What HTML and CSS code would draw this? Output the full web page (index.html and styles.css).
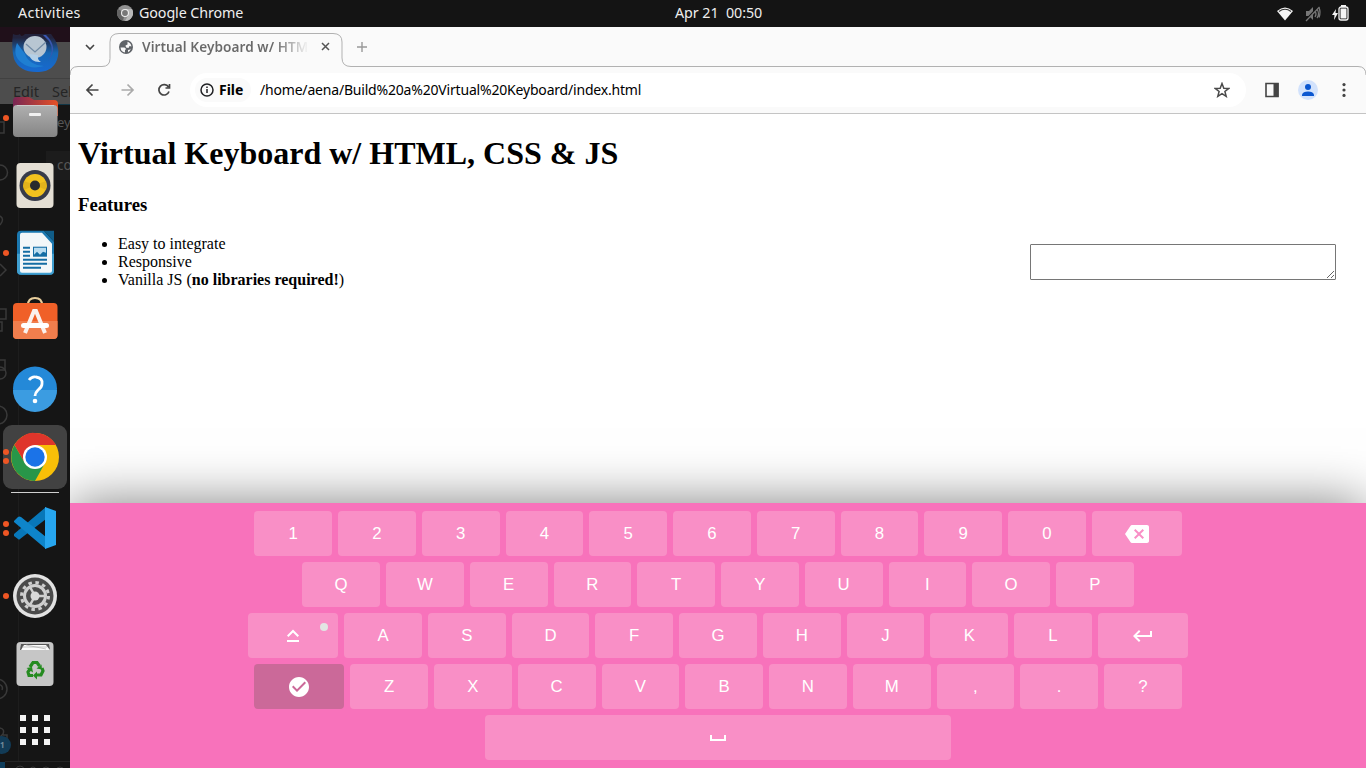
FILE: index.html
```html
<!DOCTYPE html>
<html lang="en">
<head>
<meta charset="utf-8">
<title>Virtual Keyboard w/ HTML, CSS &amp; JS</title>
<link rel="stylesheet" href="styles.css">
</head>
<body>
<header class="topbar">
  <span class="activities">Activities</span>
  <svg class="app-icon" width="16" height="16" viewBox="0 0 16 16"><circle cx="8" cy="8" r="8" fill="#929292"/><path d="M8 8L1 4a8 8 0 0 0 5 11.700z" fill="#636363"/><path d="M8 4h7a8 8 0 0 1-7 12l3.500-6z" fill="#b8b8b8"/><circle cx="8" cy="8" r="4" fill="#eee"/><circle cx="8" cy="8" r="2.900" fill="#777"/></svg>
  <span class="app-name">Google Chrome</span>
  <span class="clock">Apr 21&nbsp; 00:50</span>
  <svg class="status" width="76" height="20" viewBox="0 0 76 20">
    <path d="M0 6Q8 -1 16 6L8 15.500z" fill="#f4f4f4"/><path d="M2 6.500Q8 2.100 14 6.500" fill="none" stroke="#333" stroke-width="1.100"/>
    <g stroke="#777" fill="none" stroke-width="1.300" transform="translate(0 -1)"><path d="M29 7h3l4-4v13l-4-4h-3z" fill="#777" stroke="none"/><path d="M38 7q2 3 0 6M40 5q3 5 0 9M42 3.500q2 5 0 10"/><path d="M29 16L42 2.500" stroke="#141414" stroke-width="2"/><path d="M29 17L42.500 3"/></g>
    <path d="M59 4l-4 6h2.500l-.5 5 4-7h-2.500z" fill="#f4f4f4"/><rect x="62" y="2" width="9" height="13" rx="2" fill="none" stroke="#f4f4f4" stroke-width="1.300"/><path d="M64 0h5v2h-5zM63.500 3.500h6v10h-6z" fill="#f4f4f4"/>
  </svg>
</header>
<main class="desktop">
  <nav class="dock">
    <svg class="behind" width="70" height="741" viewBox="0 27 70 741">
      <path fill="#151515" d="M0 27h70v741H0z"/><path fill="#20101a" d="M0 27h70v15H0z"/><path fill="#4d4d4d" d="M0 42h70v62H0z"/><path stroke="#414141" d="M0 78.500h70"/><path stroke="#123747" d="M57 104.500h13"/>
      <path stroke="#1d1d1d" d="M18.500 104v658"/><path fill="#1c1c1c" d="M46 151h24v29H46z"/>
      <g class="behind-text"><text x="13" y="97" fill="#252525" textLength="26">Edit</text><text x="52" y="97" fill="#252525">Sel</text><text x="57" y="127" font-size="13" fill="#555">ey</text><text x="57" y="170" font-size="13.500" fill="#565656">co</text></g>
      <g stroke="#393939" stroke-width="1.500" fill="none"><path d="M-4 122h8v11h-8M0 165a7 7 0 0 1 0 15M0 216q5 3 0 9M0 264l6 6-6 6M0 309h6v10H0M-2 322h4v9h-4M0 360h5v10H0"/><circle cx="0" cy="373" r="6"/><circle cx="-2" cy="415" r="9"/><circle cx="-3" cy="689" r="10"/><path d="M-3 684q7 1 5 6M0 728q5 1 3 6l-3 3M3 735h4v5"/></g>
      <circle cx="2" cy="745" r="9" fill="#123b56"/><text x="0" y="748" class="badge-text">1</text><path fill="#0f3e5c" d="M0 762h5v6H0z"/><path stroke="#252525" d="M5 761.500h65"/><g fill="none" stroke="#393939"><circle cx="20" cy="770" r="4"/><circle cx="33" cy="770" r="3"/><circle cx="46" cy="771" r="4"/><circle cx="60" cy="771" r="4"/></g>
    </svg>
    <ul class="apps">
      <li><svg viewBox="0 0 68 68"><defs><linearGradient id="tb" x1="0" y1="0" x2="0" y2="1"><stop offset=".1" stop-color="#22233c"/><stop offset=".5" stop-color="#1767b4"/><stop offset="1" stop-color="#1769d1"/></linearGradient></defs><path d="M12 18q4 2 7 0 1 4 5 0h26q9 11 7 22-3 15-19 16-19 1-25-13-3-13-1-25z" fill="url(#tb)"/><path d="M16 27q-5 13 5 20 9 7 22 3-15-1-19-12z" fill="#1f7fd2"/><path d="M45 19q13 12 2 26 7-11 1-20l-6-6z" fill="#3957b0"/><ellipse cx="34" cy="31" rx="11.500" ry="11" fill="#b8c6d2"/><path d="M25 28l9 8 11-10" fill="none" stroke="#718ba5" stroke-width="1.300"/><path d="M28 38q2 9 12 8-4-2-3-7z" fill="#b4d0e7"/></svg></li>
      <li><svg viewBox="0 0 68 68"><defs><linearGradient id="fo"><stop stop-color="#782654"/><stop offset="1" stop-color="#e75125"/></linearGradient><linearGradient id="gr" x1="0" y1="0" x2="0" y2="1"><stop stop-color="#b0b0b0"/><stop offset="1" stop-color="#858585"/></linearGradient></defs><path d="M12 17q0-4 4-4h12l5 3h20q4 0 4 4v12H12z" fill="url(#fo)"/><rect x="12" y="21" width="44.500" height="32" rx="4" fill="url(#gr)"/><path d="M16 21.500h37" stroke="#ccc"/><rect x="28" y="29" width="12" height="3" rx="1" fill="#f1f1f1"/></svg><i class="dots"><b></b></i></li>
      <li><svg viewBox="0 0 68 68"><rect x="15.500" y="11" width="37" height="45" rx="4" fill="#e4dfd4"/><circle cx="34" cy="33.500" r="15.500" fill="#373b49"/><circle cx="34" cy="33.500" r="11.500" fill="#f2c21f"/><path d="M34 33l-11-4a12 12 0 0 0 0 9zM34 33l11-4a12 12 0 0 1 0 9z" fill="#e2b31c"/><circle cx="34" cy="33.500" r="5" fill="#282a2d"/></svg></li>
      <li><svg viewBox="0 0 68 68"><g transform="translate(0 .7)"><path d="M20 11h23l10 11v29q0 4-4 4H20q-4 0-4-4V15q0-4 4-4z" fill="#1b78b0"/><path d="M16 34h37v17q0 4-4 4H20q-4 0-4-4z" fill="#409fd0"/><path d="M21 13h20l10 11v27q0 2-2 2H21q-2 0-2-2V15q0-2 2-2z" fill="#f3f7f9"/><path d="M43 11h10v11z" fill="#105d88"/><path d="M22 28h7M22 32h7M22 36h7M22 40h24M22 44h24M22 48h18" stroke="#146da4" stroke-width="2"/><path d="M32 27h14v10H32z" fill="#146da4"/><path d="M33 28h12v5l-3-1-3 3-3-3-3 3z" fill="#b9dcf0"/></g></svg><i class="dots"><b></b></i></li>
      <li><svg viewBox="0 0 68 68"><path d="M27 18q0-7 7-7t7 7" fill="none" stroke="#e8ce9c" stroke-width="2"/><rect x="12" y="16" width="44.500" height="36" rx="4" fill="#f06028"/><path d="M12 34h44.500v14q0 4-4 4H16q-4 0-4-4z" fill="#f17e4d"/><path d="M24 46l9-22h2l9 22" fill="none" stroke="#faf2ee" stroke-width="4"/><rect x="20" y="36" width="28" height="5" rx="2.500" fill="#fff"/></svg></li>
      <li><svg viewBox="0 0 68 68"><circle cx="34" cy="33.500" r="22" fill="#2489d8"/><path d="M12 35a22 22 0 0 0 44 0z" fill="#3b9ce1"/><path d="M28 25q3-4 7-3 7 1 6 7 0 3-4 6-3 3-3 6" fill="none" stroke="#fff" stroke-width="2.800"/><circle cx="34" cy="46" r="2.300" fill="#fff"/></svg></li>
      <li class="active"><svg viewBox="0 0 68 68"><circle cx="34" cy="34" r="24" fill="#f8bf08"/><path d="M34 34L13.500 22A24 24 0 0 1 55 22H34z" fill="#df352b"/><path d="M34 34L24 40 13.500 22A24 24 0 0 0 34 58l10-18z" fill="#289649"/><path d="M24 40L13.500 22Q24 8 34 10v12l-8 4z" fill="#df352b"/><circle cx="34" cy="34" r="12" fill="#fff"/><circle cx="34" cy="34" r="9.700" fill="#1b73e8"/></svg><i class="dots"><b></b><b></b></i></li>
      <li class="separator"></li>
      <li><svg viewBox="0 0 68 68"><g transform="translate(0 -1)"><path d="M13 42l4 3q1 1 2 0l26-20V13L13 40z" fill="#0877b9"/><path d="M13 27l4-4q1-1 3 0l25 20v12L13 28z" fill="#0e85ca"/><path d="M44 13l11 4v34l-11 4z" fill="#27a6ef"/></g></svg><i class="dots"><b></b><b></b></i></li>
      <li><svg viewBox="0 0 68 68"><circle cx="34" cy="34" r="22" fill="#e2e2e2"/><circle cx="34" cy="34" r="18.500" fill="#4b4b4b"/><circle cx="34" cy="34" r="13.500" fill="none" stroke="#cfcfcf" stroke-width="3" stroke-dasharray="3.500 3.568"/><circle cx="34" cy="34" r="10.500" fill="none" stroke="#cfcfcf" stroke-width="3"/><circle cx="34" cy="34" r="7" fill="#4b4b4b"/><path d="M34 34h10M34 34l-5-9M34 34l-5 9" stroke="#cfcfcf" stroke-width="2.500"/><circle cx="34" cy="34" r="4.500" fill="#d9d9d9"/></svg><i class="dots"><b></b></i></li>
      <li><svg viewBox="0 0 68 68"><rect x="15.500" y="12" width="37" height="44" rx="4" fill="#c6c6c6"/><path d="M19 20l1-6h28l1 6z" fill="#555"/><path d="M20 20l3-5h22l4 5z" fill="#fafafa"/><path d="M21 17h25M25 15l20 4" stroke="#aaa" stroke-width=".7"/><g fill="none" stroke="#258b20" stroke-width="3.200"><path d="M29 37l3-4.500h4l2.500 3.500M41 38l1 3-2 4h-5M32 45.500h-4l-1-3.500 2-3"/></g><path fill="#258b20" d="M35.500 38.500l5-4 .5 5zM36 41.500v8l-4-4zM25.500 38l5.500-1 1 5.500z"/></svg></li>
      <li class="launcher"><svg viewBox="0 0 68 68"><path fill="#f4f4f4" d="M19 17h6v6h-6zM31 17h6v6h-6zM43 17h6v6h-6zM19 29h6v6h-6zM31 29h6v6h-6zM43 29h6v6h-6zM19 41h6v6h-6zM31 41h6v6h-6zM43 41h6v6h-6z"/></svg></li>
    </ul>
  </nav>
  <section class="browser">
    <div class="tabs">
      <svg class="tab-outline" width="1296" height="48" viewBox="0 0 1296 48"><path d="M0 48q0-8.500 8-8.500h24q8 0 8-8V15q0-8.500 9-8.500h214q9 0 9 8.500v16q0 8.500 9 8.500h1007q8 0 8 8.500" fill="none" stroke="#b1b1b1"/></svg>
      <svg class="tab-menu" width="10" height="8" viewBox="0 0 10 8"><path d="M1 2l4 4 4-4" fill="none" stroke="#444" stroke-width="1.600"/></svg>
      <svg class="globe" width="14" height="14" viewBox="0 0 14 14"><circle cx="7" cy="7" r="7" fill="#5f6368"/><path d="M1.500 7.500h4L7.200 9 6 10v2.500Q2 12 1.500 7.500zM8.500 1.800Q12 3 12.400 6.500L10.500 6 9.500 8 7 7.500 6.500 5.500l2-1zM9 10l2-.5 1-1q-1 3-3 3.700z" fill="#f7f7f7"/></svg>
      <span class="tab-title">Virtual Keyboard w/ HTML</span>
      <svg class="close" width="9" height="9" viewBox="0 0 9 9"><path d="M1 1l7 7M8 1L1 8" stroke="#555" stroke-width="1.500"/></svg>
      <svg class="new-tab" width="12" height="12" viewBox="0 0 12 12"><path d="M6 1v10M1 6h10" stroke="#999" stroke-width="1.400"/></svg>
    </div>
    <div class="toolbar">
      <svg class="history" width="90" height="20" viewBox="0 0 90 20" fill="none" stroke-width="1.700"><path d="M13.500 10H2.500m5-5.500L2 10l5.500 5.500" stroke="#444"/><path d="M36.500 10h11m-5-5.500l5.500 5.500-5.500 5.500" stroke="#aaa"/><path d="M83.500 7A5.200 5.200 0 1 0 84 11.500M84.500 4v4h-4" stroke="#444"/></svg>
      <div class="address">
        <span class="file"><svg width="14" height="14" viewBox="0 0 14 14"><circle cx="7" cy="7" r="6" fill="none" stroke="#202124" stroke-width="1.500"/><path d="M7 6v4M7 3.500v1.500" stroke="#202124" stroke-width="1.500"/></svg><b>File</b></span>
        <span class="url">/home/aena/Build%20a%20Virtual%20Keyboard/index.html</span>
        <svg class="star" width="16" height="16" viewBox="0 0 16 16"><path d="M8 1.500l1.800 4.700 5 .2-3.900 3.100 1.300 4.900L8 11.700l-4.200 2.700 1.300-4.900-3.900-3.100 5-.2z" fill="none" stroke="#4a4a4a" stroke-width="1.500"/></svg>
      </div>
      <svg class="tools" width="86" height="20" viewBox="0 0 86 20"><path d="M1 3.500h12v13H1z" fill="none" stroke="#444" stroke-width="1.600"/><path d="M8.500 3h5v14h-5z" fill="#444"/><circle cx="43" cy="10" r="10" fill="#d2e2fc"/><circle cx="43" cy="7" r="3" fill="#0b57d0"/><path d="M37 16v-1.500q1-3 6-3t6 3V16z" fill="#0b57d0"/><g fill="#444"><circle cx="79" cy="4.600" r="1.600"/><circle cx="79" cy="10" r="1.600"/><circle cx="79" cy="15.400" r="1.600"/></g></svg>
    </div>
    <article class="page">
      <h1>Virtual Keyboard w/ HTML, CSS &amp; JS</h1>
      <h3>Features</h3>
      <div class="content"><ul><li>Easy to integrate</li><li>Responsive</li><li>Vanilla JS (<strong>no libraries required!</strong>)</li></ul><textarea class="use-keyboard-input"></textarea></div>
      <div class="keyboard">
        <div class="row"><button>1</button><button>2</button><button>3</button><button>4</button><button>5</button><button>6</button><button>7</button><button>8</button><button>9</button><button>0</button><button class="wide"><svg viewBox="0 0 24 24"><path fill="currentColor" d="M22 3H7c-.69 0-1.230.35-1.590.88L0 12l5.410 8.110c.36.53.9.89 1.590.89h15c1.100 0 2-.9 2-2V5c0-1.100-.9-2-2-2zm-3 12.590L17.590 17 14 13.410 10.410 17 9 15.590 12.590 12 9 8.410 10.410 7 14 10.590 17.590 7 19 8.410 15.410 12 19 15.590z"/></svg></button></div>
        <div class="row"><button>Q</button><button>W</button><button>E</button><button>R</button><button>T</button><button>Y</button><button>U</button><button>I</button><button>O</button><button>P</button></div>
        <div class="row"><button class="wide caps"><svg viewBox="0 0 24 24"><path fill="currentColor" d="M12 8.410L16.590 13 18 11.590l-6-6-6 6L7.410 13 12 8.410zM6 18h12v-2H6v2z"/></svg></button><button>A</button><button>S</button><button>D</button><button>F</button><button>G</button><button>H</button><button>J</button><button>K</button><button>L</button><button class="wide"><svg viewBox="0 0 24 24"><path fill="currentColor" d="M19 7v4H5.830l3.580-3.590L8 6l-6 6 6 6 1.410-1.410L5.830 13H21V7z"/></svg></button></div>
        <div class="row"><button class="wide dark"><svg viewBox="0 0 24 24"><path fill="currentColor" d="M12 2C6.480 2 2 6.480 2 12s4.480 10 10 10 10-4.480 10-10S17.520 2 12 2zm-2 15l-5-5 1.410-1.410L10 14.170l7.590-7.590L19 8l-9 9z"/></svg></button><button>Z</button><button>X</button><button>C</button><button>V</button><button>B</button><button>N</button><button>M</button><button>,</button><button>.</button><button>?</button></div>
        <div class="row"><button class="space"><svg viewBox="0 0 24 24"><path fill="currentColor" d="M18 9v4H6V9H4v6h16V9z"/></svg></button></div>
      </div>
    </article>
  </section>
</main>
</body>
</html>
```
FILE: styles.css
```css
* { box-sizing: border-box; }
body { margin: 0; width: 1366px; height: 768px; overflow: hidden; display: flex; flex-direction: column; background: #fff; }
svg { display: block; flex: none; }
.topbar { height: 27px; flex: none; background: #141414; color: #eee; display: grid; grid-template-columns: 117px 22px 536px 602px 76px; align-items: center; font: 14.3px/20px "Noto Sans", sans-serif; white-space: nowrap; padding-bottom: 1px; }
.activities { padding-left: 18px; letter-spacing: .32px; }
.app-name { letter-spacing: -.1px; }
.clock { letter-spacing: -.05px; }
.status { margin-top: 3px; }
.desktop { flex: 1; min-height: 0; display: flex; }
.dock { width: 70px; flex: none; position: relative; overflow: hidden; background: #151515; }
.behind { position: absolute; left: 0; top: 0; }
.behind-text { font-family: "Noto Sans", sans-serif; font-size: 14.5px; }
.badge-text { font: bold 8px "Noto Sans", sans-serif; fill: #71899a; }
.apps { position: relative; list-style: none; margin: -11px 0 0; padding: 0; display: flex; flex-direction: column; }
.apps li { height: 67.8px; padding-left: 1px; position: relative; }
.apps li svg { width: 68px; height: 68px; }
.apps .active::before { content: ""; position: absolute; left: 3px; top: 2px; width: 64px; height: 64px; border-radius: 9px; background: #424242; }
.apps .active svg { position: relative; }
.apps .separator { height: 1px; margin: 1px 11px 2px; background: #cfcfcf; }
.dots { position: absolute; left: 3px; top: 0; height: 68px; display: flex; flex-direction: column; justify-content: center; gap: 3px; }
.dots b { width: 6px; height: 6px; border-radius: 50%; background: #ee5624; }
.browser { width: 1296px; flex: none; display: flex; flex-direction: column; background: #fafafa; }
.tabs { height: 39px; position: relative; display: flex; align-items: center; padding-left: 15px; }
.tab-outline { position: absolute; left: 0; top: 0; }
.globe { margin-left: 24px; }
.tab-title { width: 167px; margin-left: 9px; overflow: hidden; white-space: nowrap; font: 600 13.6px/20px "Noto Sans", sans-serif; letter-spacing: .06px; color: transparent; background: linear-gradient(90deg, #696969 132px, #69696900 167px); background-clip: text; -webkit-background-clip: text; }
.close { margin-left: 12px; }
.new-tab { margin-left: 26px; }
.toolbar { height: 48px; border-bottom: 1px solid #c4c4c4; display: flex; align-items: center; padding-left: 15px; }
.history { margin-right: 15px; }
.address { width: 1056px; height: 34px; border-radius: 17px; background: #fff; display: flex; align-items: center; padding: 0 16px 0 5px; font: 14px/20px "Noto Sans", sans-serif; }
.file { width: 56px; height: 24px; border-radius: 12px; background: #fafafa; display: flex; align-items: center; gap: 5px; padding-left: 5px; }
.url { margin-left: 9px; letter-spacing: -.19px; }
.star { margin-left: auto; }
.tools { margin-left: 19px; }
.page { flex: 1; min-height: 0; display: flow-root; position: relative; overflow: hidden; background: #fff; padding: 0 8px; font: 16px "Liberation Serif", serif; }
.page h1 { font-size: 32px; margin: 21.44px 0; line-height: 36px; }
.page h3 { font-size: 18.72px; margin: 22.4px 0 19.7px; line-height: 21px; }
.content { display: flex; justify-content: space-between; align-items: flex-start; }
.content ul { margin: 0; padding-left: 40px; line-height: 18px; }
.use-keyboard-input { width: 306px; height: 36px; margin: 9px 22px 0 0; border: 1px solid #767676; border-radius: 1px; }
.keyboard { position: absolute; left: 0; right: 0; bottom: 0; padding: 5px 0; background: #f872bb; box-shadow: 0 0 50px rgba(0, 0, 0, .5); user-select: none; }
.row { display: flex; justify-content: center; }
.row button { height: 45px; width: 77.76px; margin: 3px; padding: 0; border: 0; border-radius: 4px; background: #f98fc6; color: #fff; font: 16.8px "Liberation Sans", sans-serif; display: flex; align-items: center; justify-content: center; position: relative; }
.row .wide { width: 90px; }
.row .space { width: 466.56px; }
.row .dark { background: #cb6999; }
.row svg { width: 24px; height: 24px; }
.caps::after { content: ""; position: absolute; top: 10px; right: 10px; width: 8px; height: 8px; border-radius: 50%; background: #e2e5e3; }
```
